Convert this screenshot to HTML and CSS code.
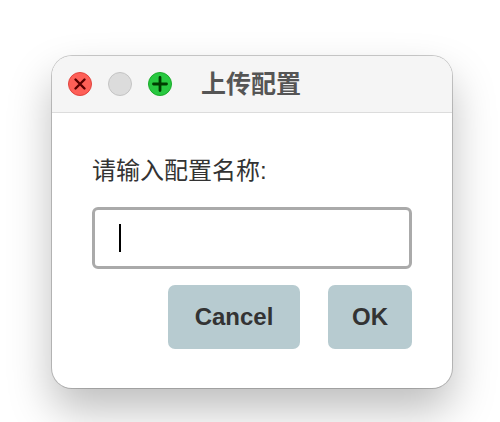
FILE: index.html
```html
<!DOCTYPE html>
<html lang="zh-CN">
<head>
	<meta charset="UTF-8">
	<meta name="viewport" content="width=device-width, initial-scale=1.0">
	<title>上传配置</title>
	<link rel="stylesheet" href="styles.css">
</head>
<body>
	<div class="window">
		<div class="titlebar">
			<div class="lights">
				<span class="light close">
					<svg viewBox="0 0 24 24" width="24" height="24"><path d="M7.5 7.5 L16.5 16.5 M16.5 7.5 L7.5 16.5" stroke="#5a0000" stroke-width="2.4" stroke-linecap="round"/></svg>
				</span>
				<span class="light min"></span>
				<span class="light zoom">
					<svg viewBox="0 0 24 24" width="24" height="24"><path d="M12 5.5 V18.5 M5.5 12 H18.5" stroke="#003d00" stroke-width="2.8" stroke-linecap="round"/></svg>
				</span>
			</div>
			<h1 class="title">上传配置</h1>
		</div>
		<div class="content">
			<label for="name" class="label">请输入配置名称:</label>
			<div class="field"><span class="caret"></span></div>
			<div class="actions">
				<button class="btn cancel">Cancel</button>
				<button class="btn ok">OK</button>
			</div>
		</div>
	</div>
</body>
</html>
```

FILE: styles.css
```css
/* General styles */
html, body {
	height: 100%;
}
body {
	margin: 0;
	padding: 56px 0 0 52px;
	box-sizing: border-box;
	min-height: 422px;
	background: #fff;
	font-family: 'Liberation Sans', 'Noto Sans CJK SC', sans-serif;
}
.window {
	width: 400px;
	height: 332px;
	box-sizing: border-box;
	border-radius: 20px;
	background: #fff;
	overflow: hidden;
	box-shadow: 0 0 0 1px rgba(0, 0, 0, 0.2), 0 22px 44px rgba(0, 0, 0, 0.26);
}
.titlebar {
	display: flex;
	align-items: center;
	height: 56px;
	padding-left: 16px;
	background: #f5f5f5;
	border-bottom: 1px solid #dcdcdc;
}
.lights {
	display: flex;
	gap: 16px;
	margin-right: 29px;
}
.light {
	width: 24px;
	height: 24px;
	box-sizing: border-box;
	border-radius: 50%;
	display: block;
}
.light svg {
	display: block;
	margin: -1px;
}
.close {
	background: #fe5f57;
	border: 1px solid #e0443e;
}
.min {
	background: #dcdcdc;
	border: 1px solid #c4c4c4;
}
.zoom {
	background: #28c840;
	border: 1px solid #1aab29;
}
.title {
	margin: 0;
	font-size: 25px;
	font-weight: bold;
	color: #555;
	line-height: 1;
}
.content {
	padding: 44px 40px 0 40px;
}
.label {
	display: block;
	font-size: 24px;
	line-height: 28px;
	color: #333;
}
.field {
	margin-top: 22px;
	height: 62px;
	box-sizing: border-box;
	border: 3px solid #aaa;
	border-radius: 6px;
	display: flex;
	align-items: center;
	padding-left: 24px;
}
.caret {
	width: 2px;
	height: 28px;
	background: #000;
}
.actions {
	display: flex;
	justify-content: flex-end;
	gap: 28px;
	margin-top: 16px;
}
.btn {
	height: 64px;
	border: none;
	border-radius: 7px;
	background: #b7cbd0;
	color: #333;
	font-family: 'Liberation Sans', sans-serif;
	font-size: 24px;
	font-weight: bold;
	padding: 0;
}
.cancel {
	width: 132px;
}
.ok {
	width: 84px;
}
```
